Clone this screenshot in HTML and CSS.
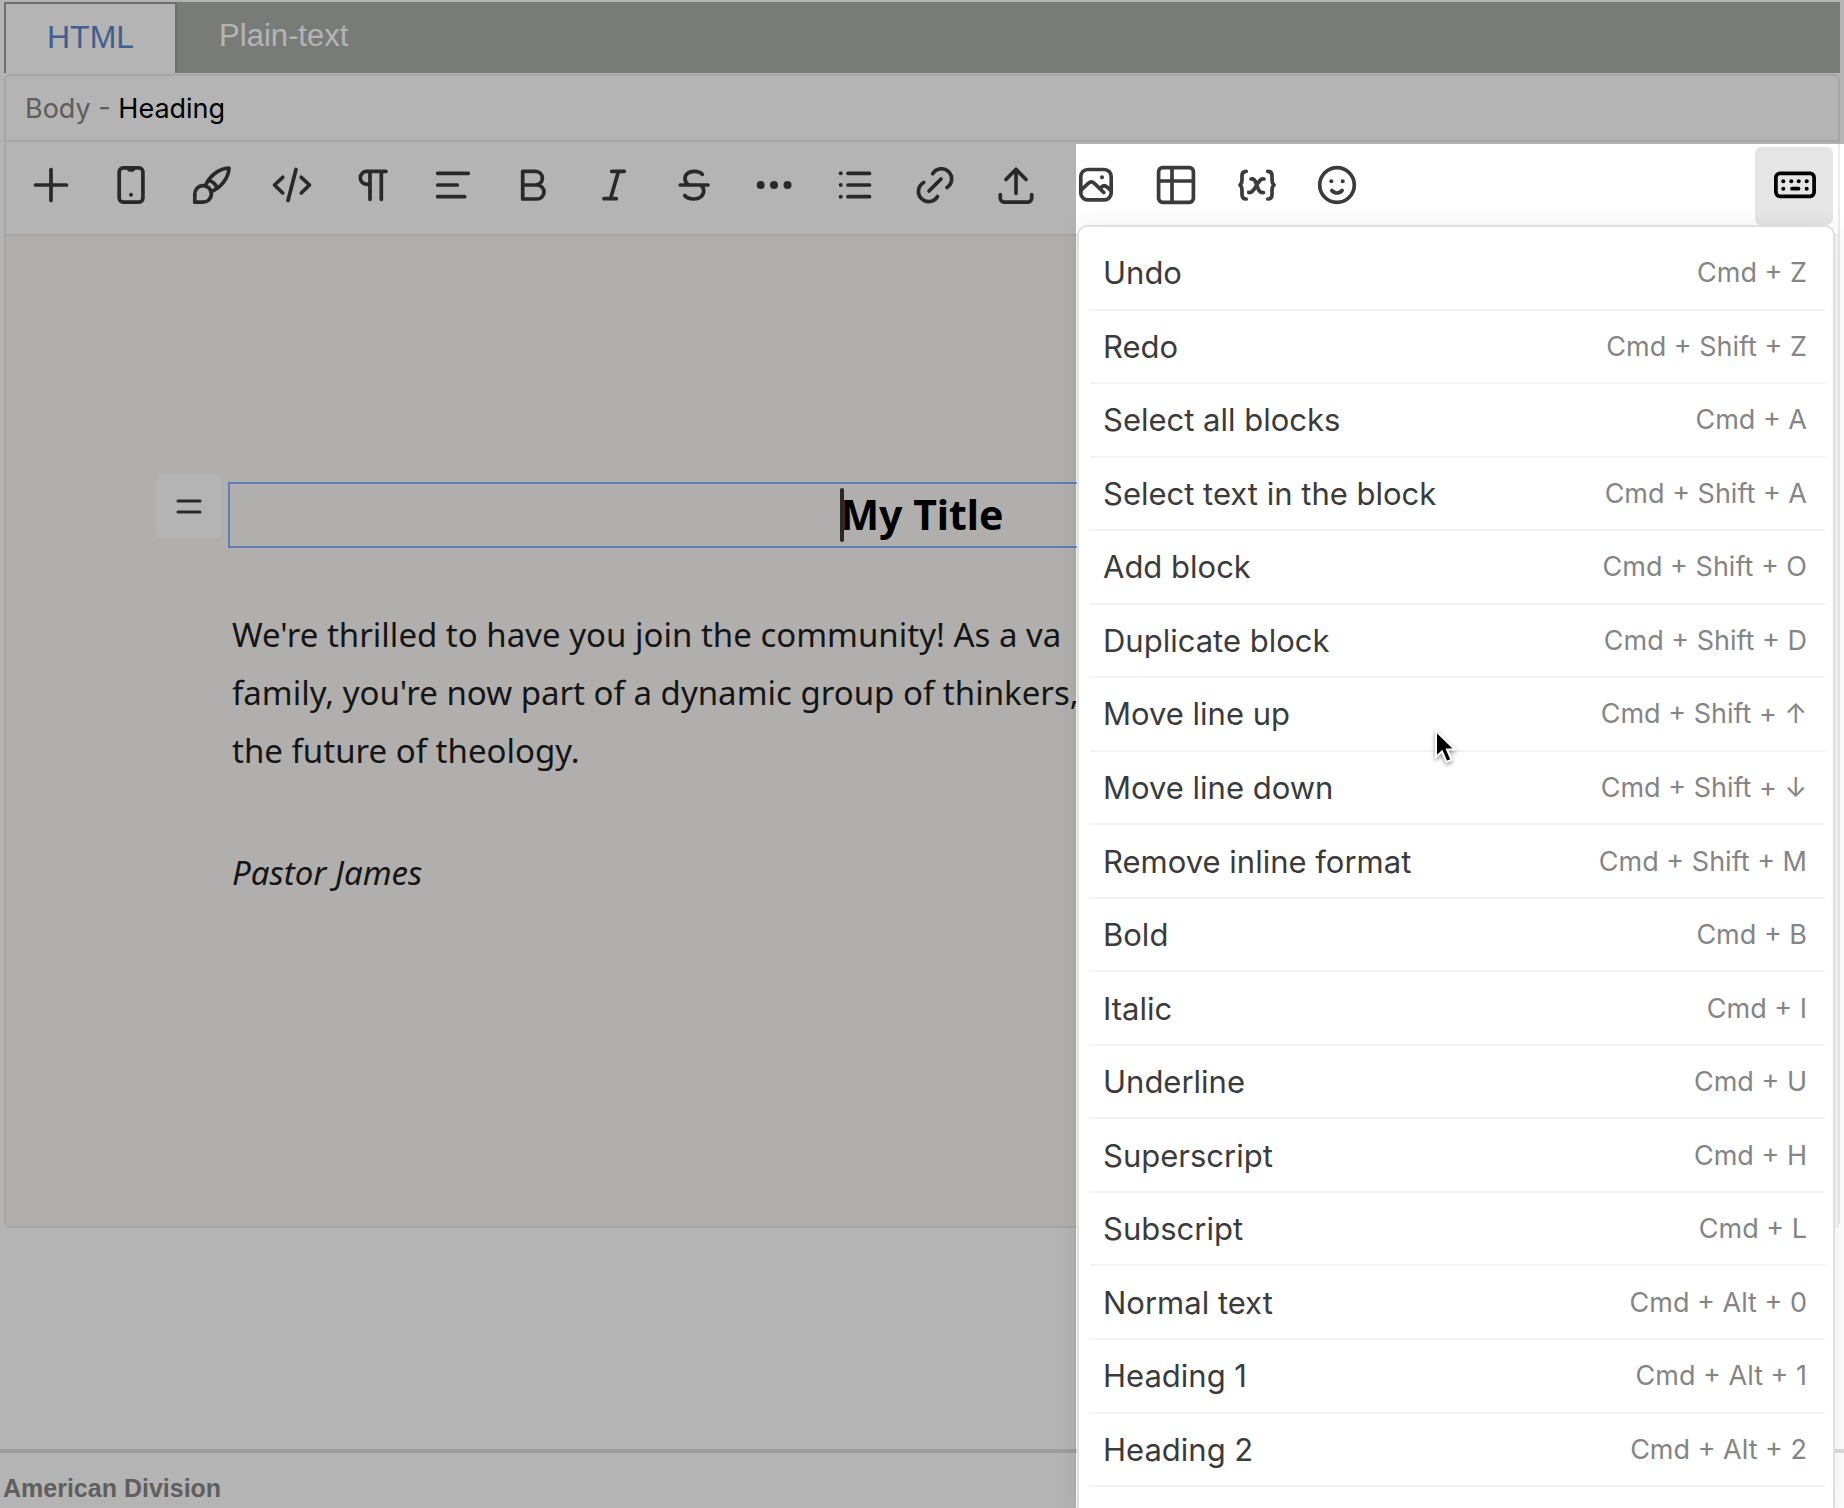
FILE: index.html
```
<!DOCTYPE html>
<html lang="en">
<head>
    <meta charset="UTF-8">
    <meta name="viewport" content="width=device-width, initial-scale=1.0">
    <title>Email Editor</title>
    <link rel="stylesheet" href="styles.css">
</head>
<body>
    <nav class="tabs">
        <button class="tab active">HTML</button>
        <button class="tab">Plain-text</button>
    </nav>

    <main class="editor">
        <div class="breadcrumb">Body - <strong>Heading</strong></div>

        <div class="toolbar">
            <div class="tools">
                <button class="tool" aria-label="Add block"><svg viewBox="0 0 40 40"><path d="M20 3.5v31M4.5 19h31"/></svg></button>
                <button class="tool" aria-label="Mobile view"><svg viewBox="0 0 40 40"><rect x="8.2" y="1.9" width="23.7" height="34.3" rx="4"/><path class="dot" d="M15.500 2h9c0 2.300-1.500 3.700-3.500 3.700h-2c-2 0-3.500-1.400-3.500-3.700z"/><circle class="dot" cx="20" cy="28.700" r="2"/></svg></button>
                <button class="tool" aria-label="Styles"><svg viewBox="0 0 40 40"><path d="M2.800 36.200v-8a8.300 8.300 0 1 1 8.300 8z"/><path d="M13.500 19.500C17 11 26 2.500 37 2c-.5 11-9 20-17.800 23.500"/><path d="M17.500 14.500c3.500 1.300 6.300 4.200 7.800 7.700"/></svg></button>
                <button class="tool" aria-label="Code view"><svg viewBox="0 0 40 40"><path d="M10.700 11.300L2.500 19l8.200 8M29.300 11.300l8.200 7.700-8.200 8M24 3.500l-8 31"/></svg></button>
                <button class="tool" aria-label="Paragraph format"><svg viewBox="0 0 40 40"><path d="M33 5.300H13.800a6.500 6.500 0 0 0 0 13H17M17 5.300v28M28.300 5.300v28"/></svg></button>
                <button class="tool" aria-label="Align"><svg viewBox="0 0 40 40"><path d="M4.700 7.300h30.600M4.700 19h19.600M4.700 30.700h27"/></svg></button>
                <button class="tool" aria-label="Bold"><svg viewBox="0 0 40 40"><path d="M9.700 5.300H22.500a6.850 6.850 0 0 1 0 13.700H9.700M22.500 19h1.500a7 7 0 0 1 0 14H9.700V5.300"/></svg></button>
                <button class="tool" aria-label="Italic"><svg viewBox="0 0 40 40"><path d="M17.700 5.300h12.600M10 32.700h12.300M24.500 5.300l-8 27.400"/></svg></button>
                <button class="tool" aria-label="Strikethrough"><svg viewBox="0 0 40 40"><path d="M28.300 8.300C26.500 6 23.500 5.300 20 5.300c-5 0-9 3-9 7.200 0 3 1.200 5 3.800 6.500M6.300 19H34M27.500 20c1.600 1.200 2.200 3 2.200 5 0 5-4.500 8-9.700 8-4.500 0-7.500-1-9.300-3.600"/></svg></button>
                <button class="tool" aria-label="More inline formats"><svg viewBox="0 0 40 40"><g class="dot"><circle cx="6.700" cy="19" r="4"/><circle cx="20" cy="19" r="4"/><circle cx="33.500" cy="19" r="4"/></g></svg></button>
                <button class="tool" aria-label="List"><svg viewBox="0 0 40 40"><g class="dot"><circle cx="5.700" cy="7.300" r="2"/><circle cx="5.700" cy="19" r="2"/><circle cx="5.700" cy="30.700" r="2"/></g><path d="M13 7.300h21.500M13 19h21.500M13 30.700h21.500"/></svg></button>
                <button class="tool" aria-label="Link"><svg viewBox="0 0 40 40"><path d="M17.700 7.700a10.200 10.200 0 1 1 14.300 13.800M8.700 16.500a10.200 10.200 0 1 0 13.800 14M14 25l12-12"/></svg></button>
                <button class="tool" aria-label="Upload file"><svg viewBox="0 0 40 40"><path d="M20 3.300v24M10 13.500L20 3.300l10 10.200M4.300 28.500V32.300a3.800 3.800 0 0 0 3.800 3.800h23.800a3.800 3.800 0 0 0 3.800-3.800V28.500"/></svg></button>
                <button class="tool" aria-label="Image"><svg viewBox="0 0 40 40"><rect x="4.800" y="3.500" width="30.400" height="30.400" rx="7"/><path d="M4.800 24.500l7.700-7.300c1.700-1.700 4-1.700 5.600 0l9.700 9.300M23.800 22.500l1.700-1.500c1.800-1.600 4-1.400 5.500 0l4 3.500"/><circle class="dot" cx="26" cy="11.300" r="2"/></svg></button>
                <button class="tool" aria-label="Table"><svg viewBox="0 0 40 40"><rect x="2.600" y="1.700" width="34.800" height="34.600" rx="4"/><path d="M16 2v34M3 15h34"/></svg></button>
                <button class="tool" aria-label="Merge variables"><svg viewBox="0 0 40 40"><path d="M9.200 5.300C6 5.300 5 6.800 5 9.800v4c0 3-1 4.500-2 5.200 1 .7 2 2.200 2 5.200v4.300c0 3 1 4.500 4.200 4.500M30.800 5.300c3.200 0 4.200 1.500 4.200 4.500v4c0 3 1 4.500 2 5.200-1 .7-2 2.200-2 5.200v4.300c0 3-1 4.500-4.200 4.500"/><path d="M14 13c2.500-.5 4 1 5 4l2 5.500c1 3 3 4.500 5.500 4M27 13c-3.500-.7-5.300 2.500-7.500 6.500s-4.500 7.700-7.800 7"/></svg></button>
                <button class="tool" aria-label="Emoji"><svg viewBox="0 0 40 40"><circle cx="20" cy="19" r="17.300"/><g class="dot"><circle cx="14.300" cy="15.300" r="2"/><circle cx="25.700" cy="15.300" r="2"/></g><path d="M14.900 24.500c2.700 3.300 7.500 3.300 10.200 0"/></svg></button>
            </div>
            <button class="tool selected" aria-label="Hotkeys"><svg viewBox="0 0 40 40"><rect x="1.900" y="7.300" width="38.200" height="23" rx="4"/><g class="dot"><circle cx="9.300" cy="15.300" r="2"/><circle cx="17.300" cy="15.300" r="2"/><circle cx="24.700" cy="15.300" r="2"/><circle cx="32.700" cy="15.300" r="2"/><circle cx="9.300" cy="22.700" r="2"/><circle cx="32.700" cy="22.700" r="2"/></g><path d="M18 22.700h6.500"/></svg></button>
        </div>

        <div class="canvas">
            <div class="block">
                <button class="handle" aria-label="Drag block"><svg viewBox="0 0 26 20"><path d="M2 4h22M2 15h22"/></svg></button>
                <h1><span class="caret"></span>My Title</h1>
            </div>
            <p>We're thrilled to have you join the community! As a va<br>family, you're now part of a dynamic group of thinkers,<br>the future of theology.</p>
            <p><em>Pastor James</em></p>
        </div>
    </main>

    <footer>American Division</footer>

    <div class="spotlight"></div>

    <ul class="hotkeys">
        <li><button>Undo <kbd>Cmd + Z</kbd></button></li>
        <li><button>Redo <kbd>Cmd + Shift + Z</kbd></button></li>
        <li><button>Select all blocks <kbd>Cmd + A</kbd></button></li>
        <li><button>Select text in the block <kbd>Cmd + Shift + A</kbd></button></li>
        <li><button>Add block <kbd>Cmd + Shift + O</kbd></button></li>
        <li><button>Duplicate block <kbd>Cmd + Shift + D</kbd></button></li>
        <li><button>Move line up <kbd>Cmd + Shift + ↑</kbd></button></li>
        <li><button>Move line down <kbd>Cmd + Shift + ↓</kbd></button></li>
        <li><button>Remove inline format <kbd>Cmd + Shift + M</kbd></button></li>
        <li><button>Bold <kbd>Cmd + B</kbd></button></li>
        <li><button>Italic <kbd>Cmd + I</kbd></button></li>
        <li><button>Underline <kbd>Cmd + U</kbd></button></li>
        <li><button>Superscript <kbd>Cmd + H</kbd></button></li>
        <li><button>Subscript <kbd>Cmd + L</kbd></button></li>
        <li><button>Normal text <kbd>Cmd + Alt + 0</kbd></button></li>
        <li><button>Heading 1 <kbd>Cmd + Alt + 1</kbd></button></li>
        <li><button>Heading 2 <kbd>Cmd + Alt + 2</kbd></button></li>
    </ul>

    <svg class="pointer" viewBox="0 0 26 38"><path d="M3 2v26l6-5.500 4.500 10.500 5-2.200L14 20.500h8z"/></svg>
</body>
</html>
```
FILE: styles.css
```
/* General Styling */
* {
    box-sizing: border-box;
}

body {
    font-family: Inter, sans-serif;
    margin: 0;
    padding-top: 2px;
    background-color: #ffffff;
    color: #3b3b3b;
    position: relative;
    min-height: 100vh;
    overflow: hidden;
}

button {
    border: none;
    padding: 0;
    background: none;
    color: inherit;
    font: inherit;
    cursor: pointer;
}

/* Tabs */
.tabs {
    display: flex;
    height: 71px;
    margin: 0 4px 1px;
    background-color: #abaeaa;
}

.tab {
    padding: 0 42px 4px;
    color: #ffffff;
    font-family: 'Liberation Sans', sans-serif;
    font-size: 31px;
}

.tab.active {
    padding: 0 41px 2px;
    border: 2px solid #9b9d9b;
    border-bottom: none;
    background-color: #ffffff;
    color: #5b88cb;
    font-size: 32px;
}

/* Editor */
.editor {
    margin: 0 4px;
    border: 2px solid #ebebeb;
    border-radius: 6px;
}

.breadcrumb {
    padding: 1px 19px 0;
    border-bottom: 2px solid #ebebeb;
    color: #858585;
    font-size: 27px;
    line-height: 63px;
}

.breadcrumb strong {
    color: #000000;
    font-weight: 400;
}

.toolbar {
    display: flex;
    justify-content: space-between;
    padding: 5px 5px 9px 6px;
    border-bottom: 2px solid #ebebeb;
}

.tools {
    display: flex;
    justify-content: space-between;
    width: 1364px;
}

.tool {
    display: flex;
    align-items: center;
    justify-content: center;
    width: 78px;
    height: 78px;
    border-radius: 6px;
}

.tool.selected {
    background-color: #e5e5e5;
    color: #000000;
}

.tool svg {
    width: 40px;
    height: 40px;
    overflow: visible;
    fill: none;
    stroke: currentColor;
    stroke-width: 3.7;
    stroke-linecap: round;
    stroke-linejoin: round;
}

.tool svg .dot {
    fill: currentColor;
    stroke: none;
}

.canvas {
    min-height: 990px;
    padding: 246px 222px 0;
    background-color: #f9f8f5;
    color: #1e1e1e;
    font-family: 'Noto Sans', sans-serif;
    font-size: 33px;
    line-height: 58px;
}

.canvas p {
    margin: 58px 4px 64px;
}

.block {
    position: relative;
    border: 2px solid #87b0ff;
}

.block h1 {
    margin: 0;
    padding-bottom: 2px;
    color: #000000;
    font-size: 41px;
    line-height: 60px;
    text-align: center;
}

.caret {
    position: absolute;
    top: 4px;
    width: 4px;
    height: 54px;
    border-radius: 2px;
    background-color: #3b3b3b;
}

.handle {
    display: flex;
    align-items: center;
    justify-content: center;
    position: absolute;
    top: -10px;
    left: -74px;
    width: 65px;
    height: 65px;
    border-radius: 6px;
    background-color: #ffffff;
}

.handle svg {
    width: 26px;
    height: 20px;
    stroke: #3b3b3b;
    stroke-width: 3;
    stroke-linecap: round;
}

footer {
    margin-top: 221px;
    padding: 15px 3px 0;
    border-top: 4px solid #dddddd;
    color: #878787;
    font-family: 'Liberation Sans', sans-serif;
    font-size: 25px;
    font-weight: 700;
    line-height: 40px;
}

/* Dims everything but the hotkeys area */
.spotlight {
    position: absolute;
    top: 144px;
    right: 0;
    bottom: 0;
    width: 768px;
    box-shadow: 0 0 0 2000px rgba(0, 0, 0, 0.294);
    pointer-events: none;
}

/* Hotkeys menu */
.hotkeys {
    display: flex;
    flex-direction: column;
    position: absolute;
    top: 227px;
    right: 11px;
    bottom: -10px;
    width: 754px;
    margin: 0;
    padding: 10px 8px 31px 10px;
    border-radius: 8px;
    background-color: #ffffff;
    box-shadow: 0 0 0 2px #dfdfdf, 0 2px 24px rgba(0, 0, 0, 0.1);
    list-style: none;
}

.hotkeys li {
    display: flex;
    flex: 1;
    border-bottom: 2px solid #f3f3f3;
}

.hotkeys button {
    display: flex;
    flex: 1;
    align-items: center;
    justify-content: space-between;
    padding: 0 18px 0 14px;
    font-size: 31px;
}

.hotkeys kbd {
    color: #858585;
    font-family: inherit;
    font-size: 27px;
}

.pointer {
    position: absolute;
    top: 729px;
    left: 1433px;
    width: 26px;
    height: 38px;
    fill: #000000;
    stroke: #ffffff;
    stroke-width: 2;
    filter: drop-shadow(0 2px 2px rgba(0, 0, 0, 0.4));
}
```
